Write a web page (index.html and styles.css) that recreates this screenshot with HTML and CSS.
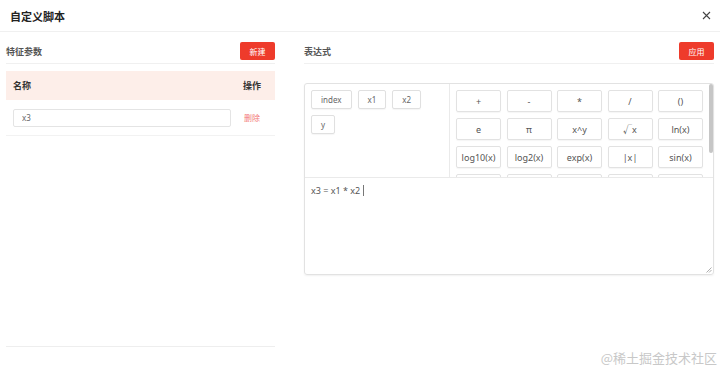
FILE: index.html
```html
<!DOCTYPE html>
<html lang="zh">
<head>
    <meta charset="UTF-8">
    <title>自定义脚本</title>
    <link rel="stylesheet" href="styles.css">
</head>
<body>
    <div class="dialog">
        <div class="dialog-header">
            <span class="dialog-title">自定义脚本</span>
            <svg class="dialog-close" width="9" height="9" viewBox="0 0 9 9">
                <path d="M1 1 L8 8 M8 1 L1 8" stroke="#444" stroke-width="1.1"/>
            </svg>
        </div>
        <div class="dialog-body">
            <div class="panel-left">
                <div class="section-head">
                    <span class="section-title">特征参数</span>
                    <button class="btn-red">新建</button>
                </div>
                <div class="param-table">
                    <div class="table-head">
                        <span>名称</span>
                        <span>操作</span>
                    </div>
                    <div class="table-row">
                        <input class="param-input" type="text" value="x3">
                        <span class="link-delete">删除</span>
                    </div>
                </div>
            </div>
            <div class="panel-right">
                <div class="section-head">
                    <span class="section-title">表达式</span>
                    <button class="btn-red">应用</button>
                </div>
                <div class="expr-box">
                    <div class="expr-tools">
                        <div class="var-list">
                            <span class="var-btn">index</span>
                            <span class="var-btn">x1</span>
                            <span class="var-btn">x2</span>
                            <span class="var-btn">y</span>
                        </div>
                        <div class="calc-area">
                            <div class="calc-grid">
                                <span class="calc-btn">+</span>
                                <span class="calc-btn">-</span>
                                <span class="calc-btn">*</span>
                                <span class="calc-btn">/</span>
                                <span class="calc-btn">()</span>
                                <span class="calc-btn">e</span>
                                <span class="calc-btn">π</span>
                                <span class="calc-btn">x^y</span>
                                <span class="calc-btn">√x</span>
                                <span class="calc-btn">ln(x)</span>
                                <span class="calc-btn">log10(x)</span>
                                <span class="calc-btn">log2(x)</span>
                                <span class="calc-btn">exp(x)</span>
                                <span class="calc-btn">|x|</span>
                                <span class="calc-btn">sin(x)</span>
                                <span class="calc-btn"></span>
                                <span class="calc-btn"></span>
                                <span class="calc-btn"></span>
                                <span class="calc-btn"></span>
                                <span class="calc-btn"></span>
                            </div>
                            <div class="scroll-thumb"></div>
                        </div>
                    </div>
                    <div class="expr-input">
                        <span>x3 = x1 * x2</span><span class="caret"></span>
                        <svg class="resize-grip" width="6" height="6" viewBox="0 0 6 6">
                            <path d="M0.5 5.5 L5.5 0.5 M3 5.5 L5.5 3" stroke="#999" stroke-width="0.8"/>
                        </svg>
                    </div>
                </div>
            </div>
        </div>
        <div class="watermark">@稀土掘金技术社区</div>
    </div>
</body>
</html>
```

FILE: styles.css
```css
body {
    margin: 0;
    padding: 0;
    background: #fff;
    font-family: "Noto Sans", "Noto Sans CJK SC", sans-serif;
    color: #333;
}
.dialog {
    width: 720px;
    height: 373px;
    position: relative;
    overflow: hidden;
}
.dialog-header {
    height: 32px;
    border-bottom: 1px solid #f0f0f0;
    display: flex;
    align-items: center;
    justify-content: space-between;
    padding: 0 10px;
    box-sizing: border-box;
}
.dialog-title {
    font-size: 11px;
    font-weight: bold;
    color: #222;
}
.dialog-close {
    margin-right: -1px;
}
.dialog-body {
    display: flex;
    padding: 0 6px;
    gap: 29px;
}
.panel-left {
    width: 269px;
}
.panel-right {
    flex: 1;
}
.section-head {
    margin-top: 10px;
    height: 18px;
    padding-bottom: 3px;
    border-bottom: 1px solid #f0f0f0;
    display: flex;
    align-items: center;
    justify-content: space-between;
}
.section-title {
    font-size: 9px;
    font-weight: bold;
    color: #555;
}
.btn-red {
    height: 18px;
    width: 35px;
    border: none;
    border-radius: 2px;
    background-color: #ee3b2b;
    color: #fff;
    font-size: 8px;
    font-family: inherit;
    padding: 0;
}
.param-table {
    margin-top: 7px;
    height: 276px;
    border-bottom: 1px solid #eee;
    box-sizing: border-box;
}
.table-head {
    height: 29px;
    background-color: #fdeee9;
    display: flex;
    align-items: center;
    justify-content: space-between;
    padding: 0 14px 0 7px;
    font-size: 9px;
    font-weight: bold;
    color: #333;
}
.table-row {
    height: 36px;
    border-bottom: 1px solid #f2f2f2;
    display: flex;
    align-items: center;
    padding: 0 0 0 7px;
    box-sizing: border-box;
}
.param-input {
    width: 218px;
    height: 18px;
    box-sizing: border-box;
    border: 1px solid #e4e4e4;
    border-radius: 2px;
    padding: 0 8px;
    font-size: 8px;
    font-family: inherit;
    color: #666;
    outline: none;
}
.link-delete {
    margin-left: 13px;
    font-size: 8px;
    color: #f37a78;
}
.expr-box {
    margin-top: 19px;
    height: 192px;
    border: 1px solid #e2e2e2;
    border-radius: 3px;
    box-shadow: 0 1px 2px rgba(0, 0, 0, 0.06);
    box-sizing: border-box;
    display: flex;
    flex-direction: column;
}
.expr-tools {
    height: 94px;
    border-bottom: 1px solid #eaeaea;
    display: flex;
    box-sizing: border-box;
}
.var-list {
    width: 145px;
    border-right: 1px solid #eaeaea;
    display: flex;
    flex-wrap: wrap;
    align-content: flex-start;
    gap: 6px 6px;
    padding: 6px 24px 6px 6px;
    box-sizing: border-box;
}
.var-btn {
    height: 17px;
    padding: 0 9px;
    border: 1px solid #e0e0e0;
    border-radius: 2px;
    font-size: 8px;
    color: #666;
    display: flex;
    align-items: center;
    justify-content: center;
    box-shadow: 0 1px 1px rgba(0, 0, 0, 0.04);
}
.calc-area {
    flex: 1;
    position: relative;
    overflow: hidden;
    padding: 6px 0 0 6px;
}
.calc-grid {
    display: grid;
    grid-template-columns: repeat(5, 45px);
    grid-auto-rows: 22px;
    column-gap: 5.5px;
    row-gap: 6px;
}
.calc-btn {
    border: 1px solid #e2e2e2;
    border-radius: 2px;
    font-size: 9px;
    color: #555;
    display: flex;
    align-items: center;
    justify-content: center;
    box-shadow: 0 1px 1px rgba(0, 0, 0, 0.04);
}
.scroll-thumb {
    position: absolute;
    right: 0;
    top: 0;
    width: 4px;
    height: 69px;
    border-radius: 2px;
    background-color: #c6c6c6;
}
.expr-input {
    flex: 1;
    position: relative;
    padding: 6px 6px;
    font-size: 9px;
    color: #555;
}
.caret {
    display: inline-block;
    width: 1px;
    height: 11px;
    margin-left: 3px;
    background-color: #777;
    vertical-align: -2px;
}
.resize-grip {
    position: absolute;
    right: 1px;
    bottom: 1px;
}
.watermark {
    position: absolute;
    right: 3px;
    bottom: 6px;
    font-size: 13px;
    color: #c8c8c8;
    font-family: "Noto Sans CJK SC", sans-serif;
}
```
